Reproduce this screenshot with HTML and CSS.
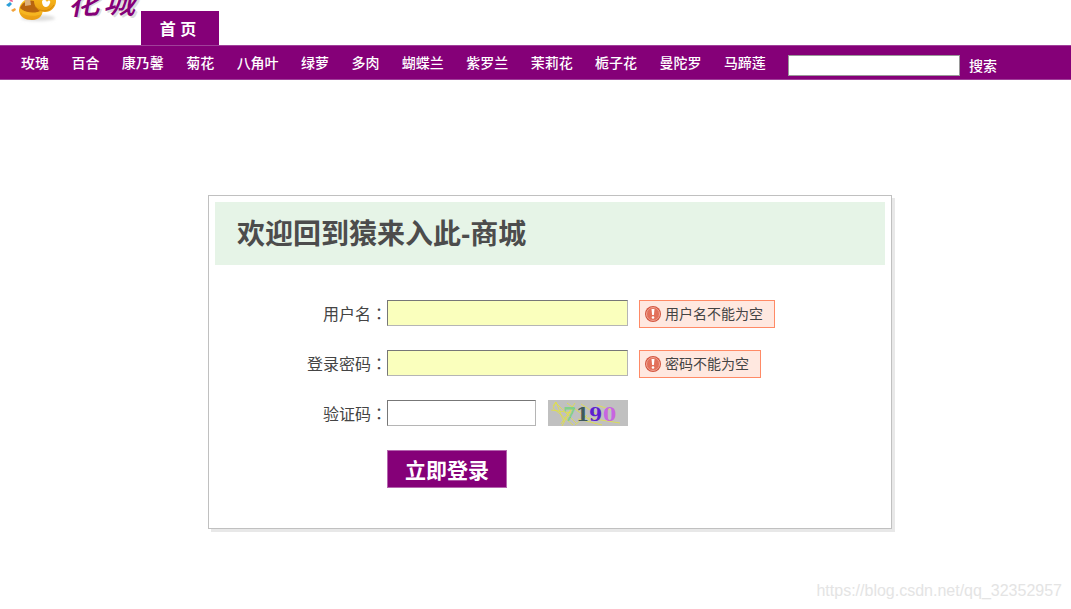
FILE: index.html
```html
<!DOCTYPE html>
<html lang="zh-CN">
<head>
<meta charset="utf-8">
<title>花城</title>
<link rel="stylesheet" href="styles.css">
</head>
<body>
<header class="top">
  <a class="logo" href="#" aria-label="花城">
    <svg width="141" height="45" viewBox="0 0 141 45">
      <defs>
        <linearGradient id="gold" x1="0" y1="0" x2="0" y2="1">
          <stop offset="0" stop-color="#ffc91f"/>
          <stop offset="1" stop-color="#e99a12"/>
        </linearGradient>
        <filter id="soft" x="-20%" y="-20%" width="140%" height="160%"><feGaussianBlur stdDeviation="1.5"/></filter>
      </defs>
      <ellipse cx="38" cy="18" rx="17" ry="3" fill="#dcdcdc" filter="url(#soft)"/>
      <path d="M6 5l4-3 2 2-3 3z" fill="#2c9fd9"/>
      <path d="M9 1l3-2 1 3z" fill="#e95a8a"/>
      <path d="M11 10l4-2 1 2-3 2z" fill="#f2a33c"/>
      <path d="M19 11C19 3 26-2 32-3c8-1 11 4 11 10 0 8-3 13-11 13-7 0-12-3-13-9z" fill="url(#gold)"/>
      <path d="M20 8C22 2 29-1 35 1l7 9c-4 4-15 5-22-2z" fill="#b8640f"/>
      <path d="M20 9c6 4 16 5 22 1v4c-7 3-17 2-22-2z" fill="#f6b520"/>
      <path d="M25 0l5-1 1 6-6 1z" fill="#ddb07a"/>
      <circle cx="45" cy="1" r="11" fill="url(#gold)"/>
      <path d="M35 6c4 6 14 7 19-1" fill="none" stroke="#d68b0b"/>
      <path d="M42 2c0-3 4-3 5 0 2-3 4-1 3 1-1 3-3 4-4 4-2 0-4-2-4-5z" fill="#fff"/>
      <g class="logo-name">
        <text class="logo-shade" x="70" y="15" transform="rotate(-3 80 15)">花</text>
        <text class="logo-shade" x="105" y="15" transform="rotate(3 118 15)">城</text>
        <text x="68" y="14" transform="rotate(-3 80 14)">花</text>
        <text x="103" y="13" transform="rotate(3 118 13)">城</text>
      </g>
    </svg>
  </a>
  <a class="tab" href="#">首 页</a>
</header>

<nav class="bar">
  <ul class="menu">
    <li><a href="#">玫瑰</a></li>
    <li><a href="#">百合</a></li>
    <li><a href="#">康乃馨</a></li>
    <li><a href="#">菊花</a></li>
    <li><a href="#">八角叶</a></li>
    <li><a href="#">绿萝</a></li>
    <li><a href="#">多肉</a></li>
    <li><a href="#">蝴蝶兰</a></li>
    <li><a href="#">紫罗兰</a></li>
    <li><a href="#">茉莉花</a></li>
    <li><a href="#">栀子花</a></li>
    <li><a href="#">曼陀罗</a></li>
    <li><a href="#">马蹄莲</a></li>
  </ul>
  <form class="search">
    <input type="text" aria-label="搜索">
    <button type="button">搜索</button>
  </form>
</nav>

<main class="page">
  <section class="card">
    <h1 class="title">欢迎回到猿来入此-商城</h1>
    <form class="login">
      <div class="row">
        <label for="user">用户名<span class="colon" lang="zh-TW">：</span></label>
        <input class="field filled" id="user" type="text">
        <p class="tip">
          <svg width="18" height="18" viewBox="0 0 18 18" aria-hidden="true">
            <circle cx="9" cy="9" r="8" fill="#d4553f"/>
            <circle cx="9" cy="9" r="6.500" fill="#e2705a" stroke="#f0a595"/>
            <path d="M7.500 4h3l-.6 6H8.100z" fill="#fff"/>
            <circle cx="9" cy="12.500" r="1.300" fill="#fff"/>
          </svg>用户名不能为空</p>
      </div>
      <div class="row">
        <label for="pass">登录密码<span class="colon" lang="zh-TW">：</span></label>
        <input class="field filled" id="pass" type="password">
        <p class="tip">
          <svg width="18" height="18" viewBox="0 0 18 18" aria-hidden="true">
            <circle cx="9" cy="9" r="8" fill="#d4553f"/>
            <circle cx="9" cy="9" r="6.500" fill="#e2705a" stroke="#f0a595"/>
            <path d="M7.500 4h3l-.6 6H8.100z" fill="#fff"/>
            <circle cx="9" cy="12.500" r="1.300" fill="#fff"/>
          </svg>密码不能为空</p>
      </div>
      <div class="row">
        <label for="code">验证码<span class="colon" lang="zh-TW">：</span></label>
        <input class="field short" id="code" type="text">
        <svg class="captcha" width="80" height="26" viewBox="0 0 80 26">
          <rect width="80" height="26" fill="#c0c0c0"/>
          <path d="M5 6L8 2l8 20M8 3l20 20M8 2L5 8l20 17M3 10l22 3M13 24L27 3M14 26L24 8M19 3l24 18M27 25l12-10M33 4l18 12M40 18l32 5M49 5l14 5M30 19l24 6" fill="none" stroke="#e2e23c" stroke-width=".8"/>
          <text x="15" y="21" fill="#82d08a">7</text>
          <text x="28" y="21" fill="#3f5a5a">1</text>
          <text x="41" y="21" fill="#5d1fd0">9</text>
          <text x="55" y="21" fill="#c765e0">0</text>
        </svg>
      </div>
      <button class="submit" type="button">立即登录</button>
    </form>
  </section>
</main>
<footer class="mark">https://blog.csdn.net/qq_32352957</footer>
</body>
</html>
```
FILE: styles.css
```css
* {
  box-sizing: border-box;
}

body {
  margin: 0;
  min-height: 100vh;
  display: flex;
  flex-direction: column;
  background: #fff;
  color: #444;
  font-family: "Liberation Sans", "Noto Sans CJK SC", sans-serif;
  font-size: 14px;
}

a {
  color: inherit;
  text-decoration: none;
}

button,
input {
  font: inherit;
}

.top {
  display: flex;
  align-items: flex-end;
}

.logo svg {
  display: block;
}

.logo-name {
  font-family: "Noto Sans CJK SC", sans-serif;
  font-size: 32px;
  font-style: italic;
  font-weight: 500;
  fill: #850078;
}

.logo-shade {
  fill: #ddd;
}

.tab {
  width: 78px;
  height: 34px;
  padding-right: 4px;
  background: #850078;
  color: #fff;
  font-size: 16px;
  font-weight: bold;
  line-height: 38px;
  text-align: center;
}

.bar {
  display: flex;
  align-items: center;
  gap: 22px;
  min-height: 35px;
  padding: 0 21px;
  border: solid #a0409a;
  border-width: 1px 0;
  background: #850078;
  color: #fff;
  font-weight: 500;
}

.menu {
  display: flex;
  flex: 0 1 745px;
  justify-content: space-between;
  margin: 0;
  padding: 0;
  list-style: none;
  line-height: 20px;
  white-space: nowrap;
}

.search {
  display: flex;
  align-items: center;
  gap: 9px;
  padding-top: 6px;
}

.search input {
  width: 172px;
  height: 21px;
  padding: 0 4px;
  border: 1px solid #999;
  background: #fff;
}

.search button {
  padding: 0;
  border: 0;
  background: none;
  color: inherit;
  line-height: 20px;
  white-space: nowrap;
}

.page {
  flex: 1;
  padding: 115px 0 24px 29px;
}

.card {
  max-width: 684px;
  margin: 0 auto;
  padding: 6px 6px 40px;
  border: 1px solid #c0c0c0;
  box-shadow: 3px 3px 0 #e8e8e8;
}

.title {
  margin: 0;
  padding: 2px 22px 0;
  background: #e6f4e7;
  color: #4c4c4c;
  font-size: 28px;
  line-height: 61px;
}

.login {
  padding-top: 35px;
}

.row {
  display: flex;
  align-items: flex-start;
  margin-bottom: 22px;
}

.row label {
  width: 172px;
  font-size: 16px;
  line-height: 26px;
  text-align: right;
}

.colon {
  font-family: "Noto Sans CJK TC", sans-serif;
}

.field {
  width: 241px;
  height: 26px;
  padding: 0 4px;
  border: 1px solid #b5b5b5;
  border-top-color: #777;
  border-left-color: #777;
  background: #fff;
}

.filled {
  background: #faffbd;
}

.short {
  width: 149px;
}

.tip {
  display: flex;
  align-items: center;
  gap: 3px;
  height: 28px;
  margin: 0 0 0 11px;
  padding: 0 11px 0 4px;
  border: 1px solid #ff8a66;
  background: #ffe8e0;
  line-height: 24px;
}

.captcha {
  margin-left: 12px;
  font-family: "DejaVu Serif", serif;
  font-size: 19px;
  font-weight: bold;
}

.submit {
  display: block;
  width: 120px;
  height: 38px;
  margin-left: 172px;
  padding: 0;
  border: 1px solid #b466ae;
  background: #850078;
  color: #fff;
  font-size: 21px;
  font-weight: bold;
}

.mark {
  padding: 0 9px 8px;
  color: #e4e4e4;
  font-size: 16px;
  line-height: 20px;
  text-align: right;
}
```
